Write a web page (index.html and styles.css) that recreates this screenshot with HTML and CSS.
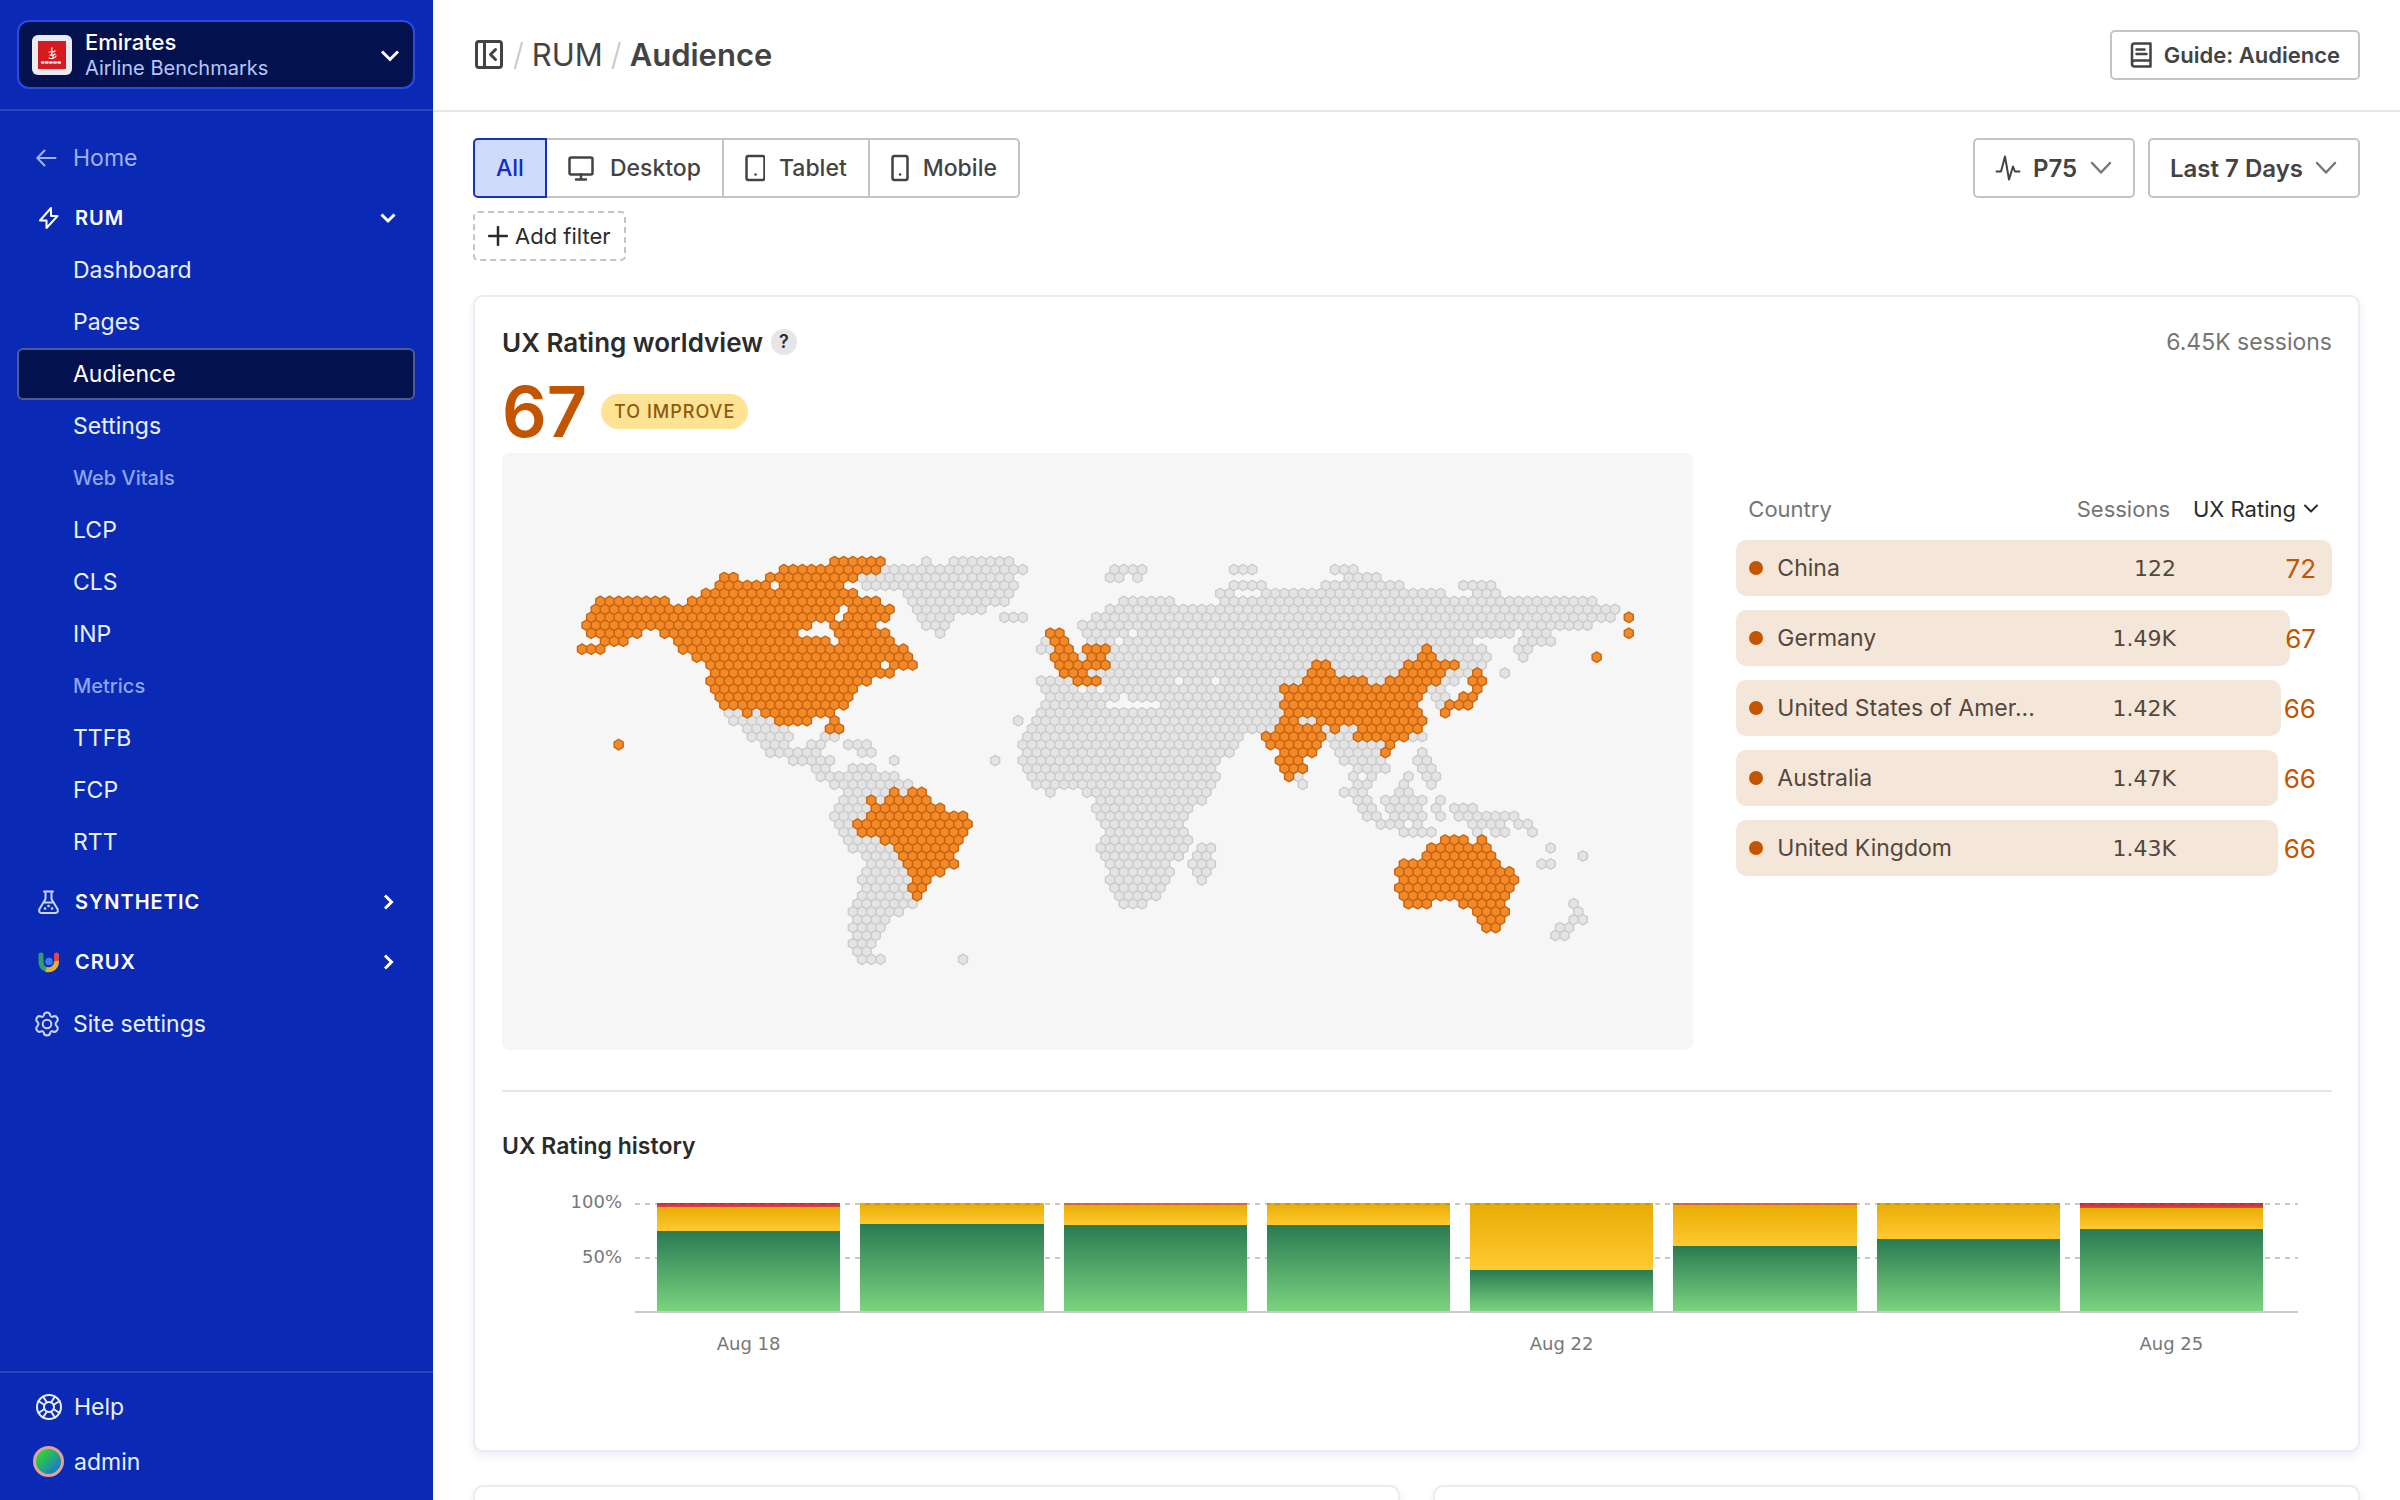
FILE: index.html
```html
<!DOCTYPE html>
<html lang="en">
<head>
<meta charset="utf-8">
<meta name="viewport" content="width=device-width, initial-scale=1">
<title>RUM / Audience</title>
<link rel="stylesheet" href="styles.css">
</head>
<body>
<div class="app">
  <aside class="sidebar">
    <div class="sidebar-top">
      <button class="site-switcher" type="button">
        <span class="site-logo">
          <svg width="28" height="28" viewBox="0 0 28 28" aria-hidden="true"><rect width="28" height="28" fill="#d71920" stroke="none"/><g fill="none" stroke="#fff" stroke-linecap="round"><path d="M11 17c3 1 6 0 7-2M12 14c2 1 4 0 5-1M14 7c-2 2 2 3 0 5s2 2 1 5M11 11c2-1 4 1 6-1" stroke-width="1.2"/><path d="M4 21.500h20" stroke-width="2.500" stroke-dasharray="1.500 2.600" opacity=".85"/></g></svg>
        </span>
        <span class="site-text">
          <span class="site-name">Emirates</span>
          <span class="site-sub">Airline Benchmarks</span>
        </span>
        <svg class="chev" width="20" height="20" viewBox="0 0 20 20" aria-hidden="true"><path d="M2 6.500l8 8 8-8"/></svg>
      </button>
    </div>
    <nav class="nav" aria-label="Main">
      <a class="nav-link nav-home" href="#home">
        <svg class="nav-icon" width="26" height="26" viewBox="0 0 26 26" aria-hidden="true"><path d="M21.500 13H3.500M10.500 5.500L3.300 13l7.200 7.500"/></svg>Home</a>
      <button class="nav-link nav-section" type="button" aria-expanded="true">
        <svg class="nav-icon" width="26" height="26" viewBox="0 0 26 26" aria-hidden="true"><path d="M15 3L4 15.500h6.500L10.500 23 21.500 11H15z"/></svg>RUM
        <svg class="chev" width="18" height="18" viewBox="0 0 18 18" aria-hidden="true"><path d="M2.500 5.500L9 12l6.500-6.500"/></svg>
      </button>
      <a class="nav-link nav-sub" href="#dashboard">Dashboard</a>
      <a class="nav-link nav-sub" href="#pages">Pages</a>
      <a class="nav-link nav-sub is-active" href="#audience" aria-current="page">Audience</a>
      <a class="nav-link nav-sub" href="#settings">Settings</a>
      <div class="nav-heading">Web Vitals</div>
      <a class="nav-link nav-sub" href="#lcp">LCP</a>
      <a class="nav-link nav-sub" href="#cls">CLS</a>
      <a class="nav-link nav-sub" href="#inp">INP</a>
      <div class="nav-heading">Metrics</div>
      <a class="nav-link nav-sub" href="#ttfb">TTFB</a>
      <a class="nav-link nav-sub" href="#fcp">FCP</a>
      <a class="nav-link nav-sub" href="#rtt">RTT</a>
      <button class="nav-link nav-section" type="button" aria-expanded="false">
        <svg class="nav-icon soft" width="26" height="26" viewBox="0 0 26 26" aria-hidden="true"><path d="M8 2.500h9M9.500 3v7L3.500 20c-1 2 0 4 2 4h14c2 0 3-2 2-4l-6-10V3M7.500 13.500h10"/><path d="M9 19.500h.1M12.500 17h.1M16 19.500h.1" stroke-width="2.600"/></svg>SYNTHETIC
        <svg class="chev" width="18" height="18" viewBox="0 0 18 18" aria-hidden="true"><path d="M6 2.500L12.500 9 6 15.500"/></svg>
      </button>
      <button class="nav-link nav-section" type="button" aria-expanded="false">
        <svg class="nav-icon" width="26" height="26" viewBox="0 0 26 26" aria-hidden="true"><g stroke-width="5"><path d="M5 6v7a8 8 0 0 0 5.500 7.500" stroke="#2f9e6b"/><path d="M20.500 6v4" stroke="#e0464a"/><path d="M10 20.300a8 8 0 0 0 10.500-8.300" stroke="#e9b02b" stroke-linecap="butt"/></g><circle cx="13" cy="12.500" r="3.800" fill="#3f7bea" stroke="none"/></svg>CRUX
        <svg class="chev" width="18" height="18" viewBox="0 0 18 18" aria-hidden="true"><path d="M6 2.500L12.500 9 6 15.500"/></svg>
      </button>
      <a class="nav-link nav-site" href="#site-settings">
        <svg class="nav-icon soft" width="26" height="26" viewBox="0 0 26 26" aria-hidden="true"><path d="M13 1.500c2 0 3 1 3.300 3 .5 1.300 1.700 1.500 2.800 1 1.800-.8 3.400 0 4.200 1.500.9 1.700.5 3-1 4.300-1 .9-1 2.500 0 3.400 1.500 1.300 1.900 2.600 1 4.300-.8 1.500-2.400 2.300-4.200 1.500-1.100-.5-2.300-.3-2.800 1-.3 2-1.300 3-3.300 3s-3-1-3.300-3c-.5-1.300-1.700-1.500-2.800-1-1.800.8-3.400 0-4.200-1.500-.9-1.700-.5-3 1-4.300 1-.9 1-2.500 0-3.400-1.500-1.300-1.900-2.600-1-4.300.8-1.500 2.400-2.300 4.200-1.500 1.100.5 2.300.3 2.800-1 .3-2 1.300-3 3.300-3z"/><circle cx="13" cy="13" r="4.300"/></svg>Site settings</a>
    </nav>
    <div class="sidebar-bottom">
      <a class="foot-link" href="#help">
        <svg class="foot-icon" width="30" height="30" viewBox="0 0 30 30" aria-hidden="true"><circle cx="15" cy="15" r="12"/><circle cx="15" cy="15" r="5"/><path d="M9 4.500l4 6M21 4.500l-4 6M9 25.500l4-6M21 25.500l-4-6M4.500 9l6 4M25.500 9l-6 4M4.500 21l6-4M25.500 21l-6-4"/></svg>Help</a>
      <a class="foot-link" href="#account"><span class="avatar"></span>admin</a>
    </div>
  </aside>

  <main class="main">
    <header class="page-head">
      <nav class="crumbs" aria-label="Breadcrumb">
        <button class="collapse" type="button" aria-label="Collapse sidebar">
          <svg width="30" height="30" viewBox="0 0 30 30" aria-hidden="true"><rect x="2.500" y="1.500" width="25" height="26" rx="2.500"/><path d="M10.500 1.500v26M21.500 9.500l-5 5 5 5"/></svg>
        </button>
        <span class="slash">/</span>
        <a href="#rum">RUM</a>
        <span class="slash">/</span>
        <h1>Audience</h1>
      </nav>
      <button class="btn guide" type="button">
        <svg width="26" height="26" viewBox="0 0 26 26" aria-hidden="true"><path d="M6.500 1.500h16v23h-16a2.500 2.500 0 0 1-2.500-2.500V4a2.500 2.500 0 0 1 2.500-2.500zM4 22a2.800 2.800 0 0 1 2.500-3.500h16M8.500 7.500h8M8.500 12h10"/></svg>
        Guide: Audience</button>
    </header>

    <div class="content">
      <div class="toolbar">
        <div class="tabs" role="group" aria-label="Device">
          <button class="tab is-on" type="button" aria-pressed="true">All</button>
          <button class="tab" type="button" aria-pressed="false"><svg width="28" height="28" viewBox="0 0 28 28" aria-hidden="true"><rect x="1.500" y="3.500" width="23" height="17" rx="1.500"/><path d="M13 20.500v4.500M8 25.500h10"/></svg>Desktop</button>
          <button class="tab" type="button" aria-pressed="false"><svg width="20" height="28" viewBox="0 0 20 28" aria-hidden="true"><rect x="1.500" y="2" width="18" height="24" rx="2"/><path d="M10.500 20.500h.1"/></svg>Tablet</button>
          <button class="tab" type="button" aria-pressed="false"><svg width="18" height="28" viewBox="0 0 18 28" aria-hidden="true"><rect x="1.500" y="2" width="15" height="24" rx="2"/><path d="M9 20.500h.1"/></svg>Mobile</button>
        </div>
        <div class="selects">
          <label class="btn select"><svg width="26" height="28" viewBox="0 0 26 28" aria-hidden="true"><path d="M1.500 17.500h4.500L10 2.500l4 23 4-13 2 5h4.500"/></svg>
            <select aria-label="Percentile"><option>P75</option></select>
            <svg class="arrow" width="22" height="22" viewBox="0 0 22 22" aria-hidden="true"><path d="M2 6l9 9.500L20 6"/></svg></label>
          <label class="btn select">
            <select aria-label="Period"><option>Last 7 Days</option></select>
            <svg class="arrow" width="22" height="22" viewBox="0 0 22 22" aria-hidden="true"><path d="M2 6l9 9.500L20 6"/></svg></label>
        </div>
      </div>
      <button class="add-filter" type="button"><svg width="20" height="20" viewBox="0 0 20 20" aria-hidden="true"><path d="M10 1v18M1 10h18"/></svg>Add filter</button>

      <section class="card worldview">
        <div class="card-head">
          <h2>UX Rating worldview</h2>
          <button class="hint" type="button" aria-label="About UX Rating">?</button>
          <span class="total">6.45K sessions</span>
        </div>
        <div class="score">
          <strong>67</strong>
          <span class="badge">TO IMPROVE</span>
        </div>
        <div class="world">
          <svg class="map" id="map" viewBox="0 0 1192 597" role="img" aria-label="UX Rating by country"></svg>
          <table class="countries">
            <thead>
              <tr><th class="c-name">Country</th><th class="c-sessions">Sessions</th><th class="c-rating"><button type="button">UX Rating <svg width="16" height="16" viewBox="0 0 16 16" aria-hidden="true"><path d="M2 4.500l6 6 6-6"/></svg></button></th></tr>
            </thead>
            <tbody>
              <tr><td class="c-name"><span class="bar" style="width:100%"></span><span class="name">China</span></td><td class="c-sessions">122</td><td class="c-rating">72</td></tr>
              <tr><td class="c-name"><span class="bar" style="width:93%"></span><span class="name">Germany</span></td><td class="c-sessions">1.49K</td><td class="c-rating">67</td></tr>
              <tr><td class="c-name"><span class="bar" style="width:91.5%"></span><span class="name">United States of Amer...</span></td><td class="c-sessions">1.42K</td><td class="c-rating">66</td></tr>
              <tr><td class="c-name"><span class="bar" style="width:91%"></span><span class="name">Australia</span></td><td class="c-sessions">1.47K</td><td class="c-rating">66</td></tr>
              <tr><td class="c-name"><span class="bar" style="width:91%"></span><span class="name">United Kingdom</span></td><td class="c-sessions">1.43K</td><td class="c-rating">66</td></tr>
            </tbody>
          </table>
        </div>
        <hr>
        <h3>UX Rating history</h3>
        <div class="chart">
          <div class="y-axis"><span>100%</span><span>50%</span></div>
          <div class="plot">
            <div class="stack"><i class="poor" style="height:4%"></i><i class="fair"></i><i class="good" style="height:74%"></i></div>
            <div class="stack"><i class="fair"></i><i class="good" style="height:80%"></i></div>
            <div class="stack"><i class="poor thin"></i><i class="fair"></i><i class="good" style="height:79%"></i></div>
            <div class="stack"><i class="fair"></i><i class="good" style="height:79%"></i></div>
            <div class="stack"><i class="fair"></i><i class="good" style="height:38%"></i></div>
            <div class="stack"><i class="poor thin"></i><i class="fair"></i><i class="good" style="height:60%"></i></div>
            <div class="stack"><i class="fair"></i><i class="good" style="height:66%"></i></div>
            <div class="stack"><i class="poor" style="height:5%"></i><i class="fair"></i><i class="good" style="height:76%"></i></div>
          </div>
          <div class="x-axis"><span>Aug 18</span><span></span><span></span><span></span><span>Aug 22</span><span></span><span></span><span>Aug 25</span></div>
        </div>
      </section>

      <div class="card-row">
        <section class="card"></section>
        <section class="card"></section>
      </div>
    </div>
  </main>
</div>
<script src="map.js"></script>
</body>
</html>
```
FILE: styles.css
```css
* { box-sizing: border-box; }
body { margin: 0; background: #fff; color: #2b2b2b; font-family: Inter, "Liberation Sans", sans-serif; font-size: 22px; }
button, select { font: inherit; color: inherit; background: none; border: 0; padding: 0; margin: 0; cursor: pointer; }
a { color: inherit; text-decoration: none; }
h1, h2, h3 { margin: 0; }
svg { flex: none; fill: none; stroke: currentColor; stroke-width: 2; stroke-linecap: round; stroke-linejoin: round; display: block; }
.app { display: flex; height: 100vh; }

.sidebar { flex: none; width: 433px; display: flex; flex-direction: column; background: #0a2ab5; color: #eaf0ff; font-size: 23px; }
.sidebar-top { padding: 20px 18px 20px 17px; border-bottom: 2px solid #2547c0; }
.site-switcher { width: 100%; height: 69px; display: flex; align-items: center; gap: 13px; padding: 0 13px; background: #03124f; border: 2px solid #2b4be0; border-radius: 12px; text-align: left; }
.site-logo { width: 40px; height: 40px; border-radius: 6px; background: #e9ebf5; display: grid; place-items: center; }
.site-text { flex: 1; display: flex; flex-direction: column; padding-bottom: 2px; }
.site-name { font-size: 22px; line-height: 28px; font-weight: 500; color: #fff; }
.site-sub { font-size: 20px; line-height: 24px; color: #b9c6f5; }
.chev { margin-left: auto; stroke-width: 3; color: #fff; stroke-linecap: butt; stroke-linejoin: miter; }
.nav { flex: 1; display: flex; flex-direction: column; padding: 21px 18px 0 17px; }
.nav-link, .nav-heading { display: flex; align-items: center; height: 52px; padding: 0 17px 0 16px; border: 1px solid transparent; border-radius: 6px; text-align: left; }
.nav-icon { margin-right: 13px; }
.soft { color: #c9d5fb; }
.nav-home { color: #9fb2f2; margin-bottom: 8px; }
.nav-section { font-size: 20px; font-weight: 600; letter-spacing: 1px; color: #fff; }
.nav-section .nav-icon { margin-left: 2px; }
.nav-section[aria-expanded="false"] { margin-top: 8px; }
.nav-sub { padding-left: 55px; }
.nav-heading { padding-left: 55px; font-size: 20px; color: #8fa4ee; font-weight: 500; }
.is-active { background: #03124f; border: 2px solid #4c5c94; padding-left: 54px; color: #fff; }
.nav-site { margin-top: 10px; }
.sidebar-bottom { border-top: 2px solid #2547c0; padding: 6px 18px 11px 32px; }
.foot-link { display: flex; align-items: center; height: 55px; gap: 10px; }
.foot-icon { margin: 0 0 0 2px; }
.foot-icon + * { margin: 0; }
.avatar { width: 31px; height: 31px; margin-left: 1px; border-radius: 50%; border: 3px solid #e0a29f; background: linear-gradient(135deg, #2fcf3c 20%, #1c7fc0 80%); }

.main { flex: 1; min-width: 0; overflow-y: auto; scrollbar-width: none; color: #434343; }
.page-head { display: flex; align-items: center; justify-content: space-between; height: 112px; padding: 0 40px; border-bottom: 2px solid #e6e6e8; }
.crumbs { display: flex; align-items: center; font-size: 31px; line-height: 40px; }
.crumbs h1 { font-size: 31px; font-weight: 600; }
.collapse { padding: 0 1px; }
.collapse svg { stroke-width: 3; }
.guide svg, .tab svg { stroke-width: 2.5; }
.slash { color: #c8c8c8; font-weight: 300; padding: 0 8px; }
.btn { display: flex; align-items: center; border: 2px solid #c4c4c4; border-radius: 5px; font-weight: 600; }
.guide { height: 50px; padding: 0 18px 0 16px; gap: 10px; }

.content { padding: 26px 40px 40px; }
.toolbar { display: flex; justify-content: space-between; }
.tabs { display: flex; }
.tab { height: 60px; display: flex; align-items: center; gap: 14px; padding: 0 21px; margin-left: -2px; border: 2px solid #c4c4c4; font-size: 23px; font-weight: 500; }
.tab:first-child { margin-left: 0; border-radius: 5px 0 0 5px; }
.tab:last-child { border-radius: 0 5px 5px 0; }
.tab.is-on { position: relative; background: #d0dbfb; border-color: #1233c4; color: #0f2fc0; }
.selects { display: flex; gap: 13px; }
.select { height: 60px; padding: 0 21px 0 20px; gap: 12px; font-size: 24px; }
.select select { appearance: none; }
.arrow { color: #777; stroke-width: 2.5; }
.add-filter { display: flex; align-items: center; gap: 7px; height: 50px; margin-top: 13px; padding: 0 13px; border: 2px dashed #c4c4c4; border-radius: 5px; color: #2b2b2b; }
.add-filter svg { color: #2b2b2b; stroke-width: 2.5; }

.card { background: #fff; border: 2px solid #eaebf3; border-radius: 10px; box-shadow: 0 4px 8px rgba(30, 40, 110, .08); }
.worldview { margin-top: 34px; padding: 25px 26px 93px 27px; }
.card-head { display: flex; align-items: center; height: 40px; }
.card-head h2 { font-size: 26px; font-weight: 600; color: #2b2b2b; }
.hint { width: 26px; height: 26px; margin-left: 8px; border-radius: 50%; background: #e6e6e6; font-size: 18px; font-weight: 600; line-height: 26px; color: #2b2b2b; }
.total { margin-left: auto; color: #757575; font-size: 23px; }
.score { display: flex; align-items: center; gap: 14px; margin-top: 8px; height: 83px; }
.score strong { font-size: 70px; font-weight: 600; line-height: 80px; color: #c45500; }
.badge { height: 35px; line-height: 35px; padding: 0 13px; border-radius: 18px; background: #ffe394; color: #8a5a10; font-size: 18px; font-weight: 500; letter-spacing: 1px; }
.world { display: grid; grid-template-columns: 2fr 1fr; gap: 43px; align-items: start; }
.map { width: 100%; height: auto; background: #f6f6f6; border-radius: 8px; }
.hex { stroke-width: 1.4; }
.hex-g { fill: #e4e4e4; stroke: #cbcbcb; }
.hex-o { fill: #f28a29; stroke: #c8640e; }

.countries { width: 100%; margin-top: 25px; border-collapse: separate; border-spacing: 0 14px; table-layout: fixed; }
.countries th, .countries td { padding: 0; }
.countries th { height: 34px; font-weight: 400; color: #757575; }
.countries tbody tr { position: relative; height: 56px; }
.c-name { width: 330px; text-align: left; }
.countries th.c-name { padding-left: 12px; }
.c-sessions { text-align: right; }
.countries th.c-sessions { padding-right: 6px; }
.c-rating { width: 156px; text-align: right; }
.countries th.c-rating { padding-right: 13px; }
.c-rating button { display: inline-flex; align-items: center; gap: 7px; color: #2b2b2b; }
.bar { position: absolute; left: 0; top: 0; bottom: 0; z-index: 0; background: #f5e6da; border-radius: 10px; }
.name { position: relative; display: flex; align-items: center; gap: 14px; padding-left: 13px; white-space: nowrap; color: #55463a; font-size: 23px; }
.name::before { content: ""; width: 14px; height: 14px; border-radius: 50%; background: #c45500; }
.countries td.c-sessions, .countries td.c-rating { position: relative; }
.countries td.c-sessions { color: #55463a; font-family: "DejaVu Sans", Inter, sans-serif; }
.countries td.c-rating { color: #c45500; font-size: 26px; padding-right: 16px; }

hr { margin: 40px 0 38px; border: 0; border-top: 2px solid #e6e6e8; }
.worldview h3 { font-size: 23px; line-height: 32px; font-weight: 600; color: #2b2b2b; }
.chart { display: grid; grid-template-columns: 120px 1fr; column-gap: 13px; margin-top: 41px; padding-right: 34px; color: #777; font-family: "DejaVu Sans", Inter, sans-serif; font-size: 18px; }
.y-axis { display: grid; grid-template-rows: 1fr 1fr; text-align: right; line-height: 20px; }
.y-axis span { margin-top: -11px; }
.plot { position: relative; display: flex; gap: 20px; height: 110px; padding: 0 35px 0 22px; border-bottom: 2px solid #c9c9c9; background: repeating-linear-gradient(90deg, #c9c9c9 0 5px, transparent 5px 10px) 0 54px / 100% 2px no-repeat; }
.plot::after { content: ""; position: absolute; left: 0; right: 0; top: 0; height: 2px; background: repeating-linear-gradient(90deg, rgba(120, 120, 120, .4) 0 5px, transparent 5px 10px); }
.stack { flex: 1; display: flex; flex-direction: column; }
.poor { background: linear-gradient(#cc1f24, #dd4a4a); }
.poor.thin { height: 2px; background: #e8643c; }
.fair { flex: 1; background: linear-gradient(#e8ac04, #ffc931); }
.good { background: linear-gradient(#2a7a52, #7bd37f); }
.x-axis { grid-column: 2; display: flex; gap: 20px; padding: 0 35px 0 22px; margin-top: 18px; line-height: 26px; }
.x-axis span { flex: 1; text-align: center; }
.card-row { display: grid; grid-template-columns: 1fr 1fr; gap: 33px; margin-top: 33px; }
.card-row .card { min-height: 400px; }
```
FILE: map.js
```js
// Hexagon world map. One string per latitude row; each run is
// colour (o = rated country, g = no rating) + first column [- last column].
// Columns are half-hexagon steps, so the cells of a run are two columns apart.
const rows = [
  "o55-65 g75 g81-93",
  "o44-64 g66-96 g116-122 g142-146 g164-168",
  "o31-33 o41-59 g61-93 g115-117 g121 g167-173",
  "o30-40 o44-56 g62-94 g142-148 g162-178 g192-198",
  "o27-59 g71-93 g139-141 g149-187 g195-199",
  "o4-18 o24-64 g72-92 g118-128 g140-220",
  "o3-55 o59-67 g73-87 g115-225",
  "o2-54 o58-66 g74-80 g92-96 g112-224 o228",
  "o1-49 o55-63 g75-79 g109-219",
  "o2-12 o18-46 o56-66 g78 o102-104 g110-118 g122-202 g206-210 o228",
  "o5-9 o21-53 o57-67 g101 o103-105 g111-115 g119-193 g205-211",
  "o0-4 o22-70 g100-102 o104-106 o110-114 g116-182 o184 g186-196 g204-206",
  "o25-71 o103-107 g109 o111-113 g115-181 o183-185 g187-197 g205 o221",
  "o28-64 o68-72 o104-114 g116-158 o160-162 g164-178 o180-190 g192-196",
  "o29-67 o105-109 g111-157 o159-163 g165-177 o179-187 g189-193 o195 g201",
  "o28-62 g100-106 o108-112 g114-128 g132-136 g140-156 o158-170 g172-174 o176-186 g188-190 o194-196",
  "o29-59 g101-107 g111 g115-151 o153-183 g185-187 o195",
  "o30-58 g102-116 g120-152 o154-182 g186-188 o192-194",
  "o31-57 g101-113 g127-151 o153-181 g187 o189-193",
  "g32-34 o36 g38 o40-54 g100-152 o154-182 o188",
  "g33-41 o43-49 o55 g95 g99-151 o153-155 g157-159 o161-183",
  "g36-44 o54-56 g98-150 o152-160 g162 o164 g166-168 o170-182",
  "g37-45 g53-55 g97-143 o149-161 g163-167 o169-179 g181-183",
  "o8 g40-44 g50-52 g58-62 g96-142 o150-160 g164-174 o176",
  "g41-51 g61-63 g97-141 o153-159 g165-173 o175 g183",
  "g46-54 g68 g90 g96-138 o152-156 g166-174 g182-184",
  "g51-53 g59-63 g97-137 o153-157 g169-175 g183-185",
  "g52-68 g98-138 o154 g156 g168 g172 g180 g184-186",
  "g55-71 g99-137 g157 g169-171 g179 g185",
  "g58-66 o68 g70 o72-74 g102 g110-136 g166-170 g178-180",
  "g57-61 o63 g65 o67-75 g113-135 g169-171 g175-183 g187",
  "g56-62 o64-78 g112-132 g170-172 g176-182 g186 g190-194",
  "g55-61 o63-83 g113-131 g171-173 g177-183 g187 g191-203",
  "g56-58 o60-84 g114-130 g174-178 g182 g194-200 g204-206",
  "g57-59 o61-83 g115-131 g179-185 g195 g199-201 g207",
  "g58-64 o66-82 g114-132 o188-192 o196",
  "g59-67 o69-81 g113-131 g135-137 o185-197 g211",
  "g62-68 o70-80 g114-130 g134-136 o184-198 g218",
  "g63-69 o71-81 g115-127 g133-137 o179-199 g209-211",
  "g62-70 o72-78 g116-128 g134-136 o178-202",
  "g61-71 o73-75 g115-127 g135 o179-203",
  "g62-70 o72-74 g116-126 o178-202",
  "g61-71 o73 g117-125 o179-201",
  "g60-72 g118-122 o180-184 o192-200 g216",
  "g59-69 o195-201 g217",
  "g60-66 o196-200 g216-218",
  "g59-65 o197-199 g213-215",
  "g60-64 g212-214",
  "g59-63",
  "g60-62",
  "g61-65 g83"
];

const STEP = 4.594;
const ROW = 7.96;
const RADIUS = 5.2;
const ORIGIN = { x: 80, y: 108.7 };
const map = document.getElementById("map");

function hexPath(cx, cy) {
  const points = [];
  for (let i = 0; i < 6; i++) {
    const a = Math.PI / 3 * i + Math.PI / 6;
    points.push((cx + RADIUS * Math.cos(a)).toFixed(2) + " " + (cy + RADIUS * Math.sin(a)).toFixed(2));
  }
  return "M" + points.join("L") + "Z";
}

for (const colour of ["g", "o"]) {
  let d = "";
  rows.forEach((row, r) => {
    for (const run of row.split(" ")) {
      if (run[0] !== colour) continue;
      const [from, to = from] = run.slice(1).split("-").map(Number);
      for (let c = from; c <= to; c += 2) {
        d += hexPath(ORIGIN.x + c * STEP, ORIGIN.y + r * ROW);
      }
    }
  });
  const path = document.createElementNS("http://www.w3.org/2000/svg", "path");
  path.setAttribute("class", "hex hex-" + colour);
  path.setAttribute("d", d);
  map.appendChild(path);
}
```
